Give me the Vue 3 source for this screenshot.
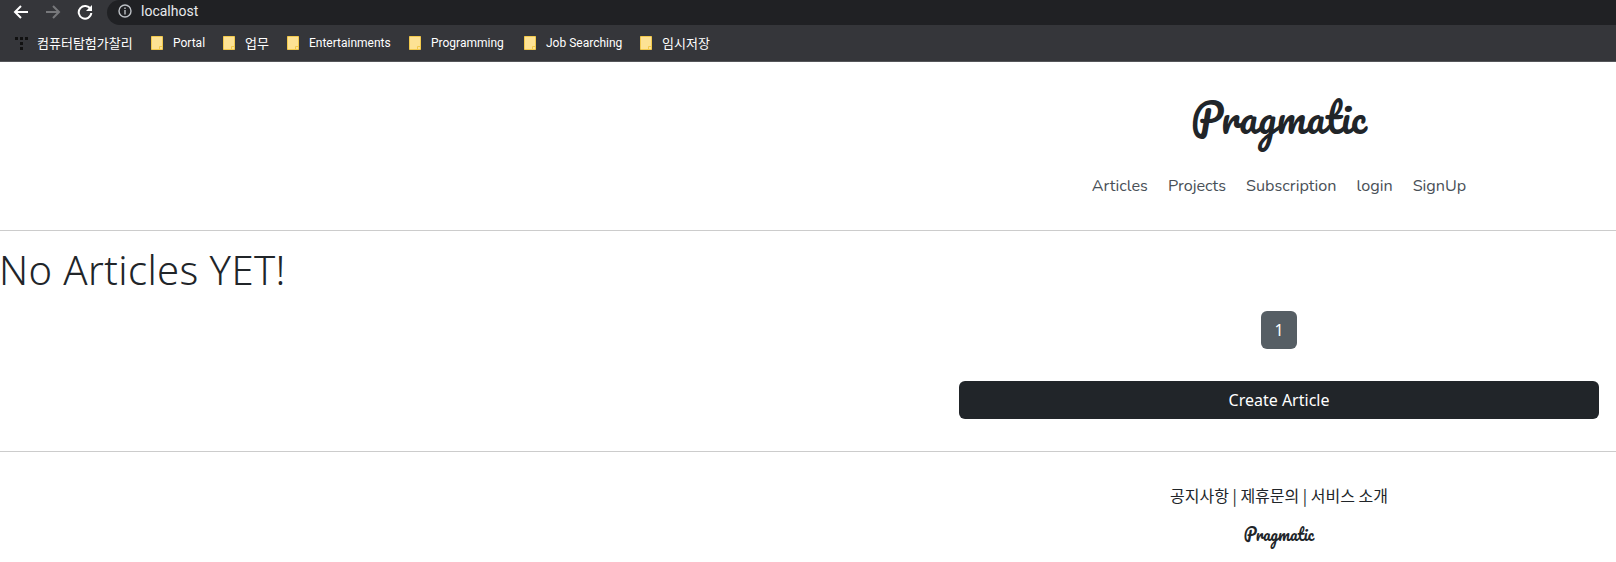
<script setup>
const bookmarks = [
  { label: 'Portal', width: 72 },
  { label: '업무', width: 64, korean: true },
  { label: 'Entertainments', width: 122 },
  { label: 'Programming', width: 115 },
  { label: 'Job Searching', width: 116 },
  { label: '임시저장', width: 80, korean: true },
]
const navItems = ['Articles', 'Projects', 'Subscription', 'login', 'SignUp']
</script>

<template>
  <div class="window">
    <div class="toolbar">
      <div class="controls">
        <svg class="ctl" width="18" height="16" viewBox="0 0 18 16"><path d="M16 8H3M9 2 3 8l6 6" fill="none" stroke="#fff" stroke-width="2"/></svg>
        <svg class="ctl" width="18" height="16" viewBox="0 0 18 16"><path d="M2 8h13M9 2l6 6-6 6" fill="none" stroke="#77787b" stroke-width="2"/></svg>
        <svg class="ctl" width="18" height="16" viewBox="0 0 18 16"><path d="M14.5 5.2A6.3 6.3 0 1 0 15.3 9" fill="none" stroke="#fff" stroke-width="2"/><path d="M16 1v6h-6z" fill="#fff"/></svg>
      </div>
      <div class="omnibox">
        <svg width="14" height="14" viewBox="0 0 14 14"><circle cx="7" cy="7" r="6" fill="none" stroke="#bdc1c6" stroke-width="1.4"/><path d="M7 6v4.4M7 3.4v1.5" stroke="#bdc1c6" stroke-width="1.4"/></svg>
        <span>localhost</span>
      </div>
    </div>
    <div class="bookmarks">
      <div class="bookmark first">
        <svg width="14" height="14" viewBox="0 0 14 14" fill="#111"><rect x="0" y="1" width="3" height="3"/><rect x="5" y="1" width="3" height="3"/><rect x="10" y="1" width="3" height="3"/><rect x="5" y="6" width="3" height="3"/><rect x="5" y="11" width="3" height="3"/></svg>
        <span class="label">컴퓨터탐험가찰리</span>
      </div>
      <div v-for="b in bookmarks" :key="b.label" class="bookmark" :class="{ korean: b.korean }" :style="{ width: b.width + 'px' }">
        <svg width="12" height="14" viewBox="0 0 12 14"><path d="M.5.5h11v13H.5z" fill="#fde293" stroke="#f2c94c"/><path d="M8.5 13.5v-3h3" fill="none" stroke="#f2c94c"/></svg>
        <span class="label">{{ b.label }}</span>
      </div>
    </div>

    <div class="viewport">
      <div class="page">
        <header class="site-header">
          <h1 class="logo">Pragmatic</h1>
          <nav class="nav">
            <a v-for="item in navItems" :key="item">{{ item }}</a>
          </nav>
        </header>
        <main class="content">
          <h1 class="empty">No Articles YET!</h1>
          <div class="pager"><span class="page-btn">1</span></div>
          <div class="action"><a class="create">Create Article</a></div>
        </main>
        <footer class="site-footer">
          <div class="links">공지사항 | 제휴문의 | 서비스 소개</div>
          <h6 class="logo small">Pragmatic</h6>
        </footer>
      </div>
    </div>
  </div>
</template>

<style>
html, body { margin: 0; overflow: hidden; background: #fff; }
</style>

<style scoped>
.window { width: 1616px; height: 562px; overflow: hidden; font-family: "Noto Sans", "Noto Sans CJK KR", sans-serif; }
.toolbar { height: 25px; background: #35363a; display: flex; align-items: center; }
.controls { display: flex; gap: 14px; padding-left: 12px; width: 96px; box-sizing: border-box; margin-top: -2px; }
.ctl { flex: none; }
.omnibox { flex: 1; height: 25px; background: #202124; border-radius: 13px 0 0 13px; margin-left: 11px; display: flex; align-items: center; gap: 9px; padding-left: 11px; padding-bottom: 3px; box-sizing: border-box; color: #e8eaed; font-family: Roboto, sans-serif; font-size: 14px; }
.bookmarks { height: 37px; background: #35363a; border-bottom: 1px solid #55565a; box-sizing: border-box; display: flex; align-items: center; padding-left: 15px; color: #fff; font-family: Roboto, "Noto Sans CJK KR", sans-serif; font-size: 12px; }
.bookmark { display: flex; align-items: center; gap: 10px; flex: none; box-sizing: border-box; white-space: nowrap; }
.bookmark.korean { font-size: 13px; }
.bookmark.korean .label, .bookmark.first .label { padding-bottom: 2px; }
.bookmark.first { width: 136px; font-size: 13px; gap: 8px; }
.viewport { width: 1616px; height: 500px; overflow: hidden; }
.page { width: 2558px; color: #212529; }
.site-header { height: 169px; border-bottom: 1px solid #ccc; box-sizing: border-box; display: flex; flex-direction: column; align-items: center; }
.logo { font-family: Pacifico, cursive; font-weight: 400; margin: 0; }
.site-header .logo { font-size: 40px; line-height: 60px; margin-top: 25px; }
.nav { display: flex; gap: 20px; margin-top: 27px; font-size: 16.2px; line-height: 24px; color: #495057; font-family: "Nunito", "Noto Sans", sans-serif; }
.content { height: 220px; }
.empty { margin: 0 0 0 -1px; font-size: 40px; font-weight: 300; line-height: 48px; padding-top: 15px; letter-spacing: 0.4px; }
.pager { display: flex; justify-content: center; margin-top: 17px; }
.page-btn { width: 36px; height: 38px; background: #565e64; border-radius: 6px; color: #fff; display: flex; align-items: center; justify-content: center; font-size: 16px; }
.action { display: flex; justify-content: center; margin-top: 32px; }
.create { width: 640px; height: 38px; background: #212529; color: #fff; border-radius: 6px; display: flex; align-items: center; justify-content: center; font-size: 16px; }
.site-footer { border-top: 1px solid #ccc; text-align: center; padding-top: 31px; }
.links { font-family: "Noto Sans CJK KR", sans-serif; font-size: 16px; line-height: 24px; }
.logo.small { font-size: 16px; line-height: 24px; margin-top: 15px; }
</style>
